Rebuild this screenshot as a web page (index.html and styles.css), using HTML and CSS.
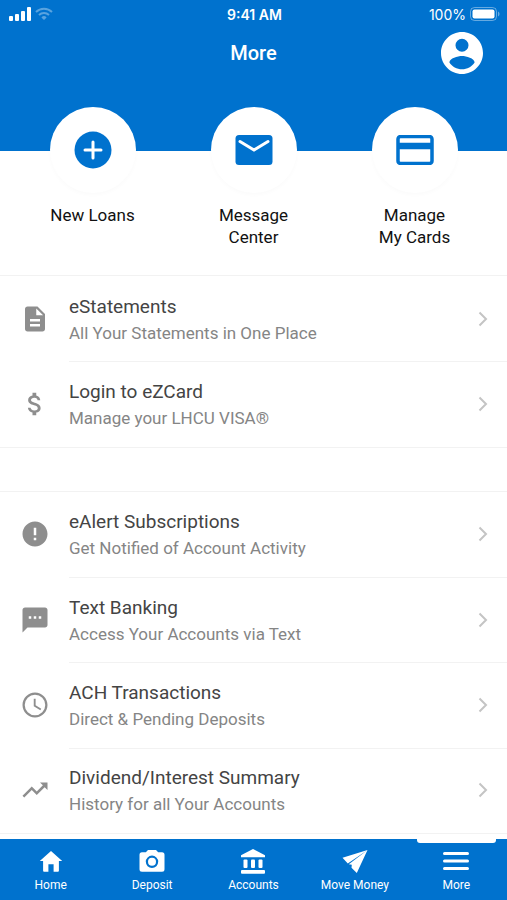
FILE: index.html
```html
<!DOCTYPE html>
<html lang="en">
<head>
    <meta charset="UTF-8">
    <meta name="viewport" content="width=device-width, initial-scale=1">
    <title>More</title>
    <link rel="stylesheet" href="styles.css">
</head>
<body>
<div class="app">
    <header class="header">
        <div class="status">
            <div class="status-left">
                <svg width="22" height="14" viewBox="0 0 22 14" fill="#fff">
                    <rect x="0" y="9" width="4" height="5" rx="1"/>
                    <rect x="6" y="7" width="4" height="7" rx="1"/>
                    <rect x="12" y="4" width="4" height="10" rx="1"/>
                    <rect x="18" y="0" width="4" height="14" rx="1"/>
                </svg>
                <svg class="wifi" width="18" height="14" viewBox="0 0 18 14" fill="none" stroke="#fff" stroke-width="2">
                    <path d="M1 5a11.500 11.500 0 0 1 16 0M4 8a7.200 7.200 0 0 1 10 0"/>
                    <path d="M9 13l-2.600-2.600a3.700 3.700 0 0 1 5.200 0z" fill="#fff" stroke="none"/>
                </svg>
            </div>
            <div class="status-time">9:41 AM</div>
            <div class="status-right">
                <span>100%</span>
                <svg width="30" height="14" viewBox="0 0 30 14">
                    <rect x="0.500" y="0.500" width="26" height="13" rx="4" fill="none" stroke="#fff" stroke-opacity=".4"/>
                    <rect x="2.500" y="2.500" width="22" height="9" rx="2" fill="#fff"/>
                    <path d="M28 4.500v5c2-.8 2-4.200 0-5z" fill="#fff" fill-opacity=".4"/>
                </svg>
            </div>
        </div>
        <div class="title">
            <h1>More</h1>
            <button class="profile" type="button" aria-label="Profile">
                <svg viewBox="2 2 20 20" fill="#fff"><path d="M12 2C6.480 2 2 6.480 2 12s4.480 10 10 10 10-4.480 10-10S17.520 2 12 2zm0 3.200a3.100 3.100 0 1 1 0 6.200 3.100 3.100 0 0 1 0-6.200zm0 14.500c-2.500 0-4.710-1.280-6-3.220.03-1.990 4-3.080 6-3.080s5.970 1.090 6 3.080c-1.290 1.940-3.500 3.220-6 3.220z"/></svg>
            </button>
        </div>
    </header>

    <main class="main">
        <div class="shortcuts">
            <a class="shortcut" href="#loans">
                <span class="circle">
                    <svg width="38" height="38" viewBox="0 0 38 38"><circle cx="19" cy="19" r="18.500" fill="#0072ce"/><path d="M19 11v16M11 19h16" stroke="#fff" stroke-width="3" stroke-linecap="round"/></svg>
                </span>
                New Loans
            </a>
            <a class="shortcut" href="#messages">
                <span class="circle">
                    <svg width="38" height="30" viewBox="0 0 38 30"><rect x="0.500" y="0" width="37" height="30" rx="3.500" fill="#0072ce"/><path d="M5 6.500l14 8.500 14-8.500" fill="none" stroke="#fff" stroke-width="3" stroke-linecap="round"/></svg>
                </span>
                Message<br>Center
            </a>
            <a class="shortcut" href="#cards">
                <span class="circle">
                    <svg width="38" height="30" viewBox="0 0 38 30"><rect x="2" y="1.500" width="34" height="27" rx="2.500" fill="none" stroke="#0072ce" stroke-width="3.500"/><path d="M2 11h34" stroke="#0072ce" stroke-width="6.500"/></svg>
                </span>
                Manage<br>My Cards
            </a>
        </div>

        <ul class="list list-short">
            <li>
                <a class="row" href="#estatements">
                    <svg class="icon" viewBox="0 0 24 24"><path d="M14 2H6c-1.100 0-2 .9-2 2v16c0 1.100.9 2 2 2h12c1.100 0 2-.9 2-2V8l-6-6zm2 16H8v-2h8v2zm0-4H8v-2h8v2zm-3-5V3.500L18.500 9H13z"/></svg>
                    <span class="text"><strong>eStatements</strong><span>All Your Statements in One Place</span></span>
                    <svg class="arrow" viewBox="0 0 10 16"><path d="M1.500 1.500L8 8l-6.500 6.500"/></svg>
                </a>
            </li>
            <li>
                <a class="row" href="#ezcard">
                    <svg class="icon" viewBox="0 0 24 24"><path d="M11.800 10.900c-2.270-.59-3-1.200-3-2.150 0-1.090 1.010-1.850 2.700-1.850 1.780 0 2.440.85 2.500 2.100h2.210c-.07-1.720-1.120-3.300-3.210-3.810V3h-3v2.160c-1.940.42-3.500 1.680-3.500 3.610 0 2.310 1.910 3.460 4.700 4.130 2.500.6 3 1.480 3 2.410 0 .69-.49 1.790-2.700 1.790-2.060 0-2.870-.92-2.980-2.100h-2.200c.12 2.190 1.760 3.420 3.680 3.830V21h3v-2.150c1.950-.37 3.500-1.500 3.500-3.550 0-2.840-2.430-3.810-4.700-4.400z"/></svg>
                    <span class="text"><strong>Login to eZCard</strong><span>Manage your LHCU VISA®</span></span>
                    <svg class="arrow" viewBox="0 0 10 16"><path d="M1.500 1.500L8 8l-6.500 6.500"/></svg>
                </a>
            </li>
        </ul>

        <ul class="list list-long">
            <li>
                <a class="row" href="#ealert">
                    <svg class="icon" viewBox="0 0 24 24"><path d="M12 2C6.480 2 2 6.480 2 12s4.480 10 10 10 10-4.480 10-10S17.520 2 12 2zm1 15h-2v-2h2v2zm0-4h-2V7h2v6z"/></svg>
                    <span class="text"><strong>eAlert Subscriptions</strong><span>Get Notified of Account Activity</span></span>
                    <svg class="arrow" viewBox="0 0 10 16"><path d="M1.500 1.500L8 8l-6.500 6.500"/></svg>
                </a>
            </li>
            <li>
                <a class="row" href="#text-banking">
                    <svg class="icon" viewBox="0 0 24 24"><path d="M20 2H4c-1.100 0-2 .9-2 2v18l4-4h14c1.100 0 2-.9 2-2V4c0-1.100-.9-2-2-2zM9 11H7V9h2v2zm4 0h-2V9h2v2zm4 0h-2V9h2v2z"/></svg>
                    <span class="text"><strong>Text Banking</strong><span>Access Your Accounts via Text</span></span>
                    <svg class="arrow" viewBox="0 0 10 16"><path d="M1.500 1.500L8 8l-6.500 6.500"/></svg>
                </a>
            </li>
            <li>
                <a class="row" href="#ach">
                    <svg class="icon" viewBox="0 0 24 24"><path d="M12 2C6.470 2 2 6.480 2 12s4.470 10 10 10 10-4.480 10-10S17.520 2 12 2zm0 18.200a8.200 8.200 0 1 1 0-16.400 8.200 8.200 0 0 1 0 16.400zM12.500 7H11v6l5.250 3.150.75-1.230-4.500-2.670z"/></svg>
                    <span class="text"><strong>ACH Transactions</strong><span>Direct &amp; Pending Deposits</span></span>
                    <svg class="arrow" viewBox="0 0 10 16"><path d="M1.500 1.500L8 8l-6.500 6.500"/></svg>
                </a>
            </li>
            <li>
                <a class="row" href="#dividend">
                    <svg class="icon" viewBox="0 0 24 24"><path d="M16 6l2.290 2.290-4.880 4.880-4-4L2 16.590 3.410 18l6-6 4 4 6.300-6.290L22 12V6z"/></svg>
                    <span class="text"><strong>Dividend/Interest Summary</strong><span>History for all Your Accounts</span></span>
                    <svg class="arrow" viewBox="0 0 10 16"><path d="M1.500 1.500L8 8l-6.500 6.500"/></svg>
                </a>
            </li>
        </ul>
    </main>

    <nav class="tabs">
        <a href="#home">
            <svg viewBox="0 0 28 28"><path d="M14 3L2.800 13.100h3.300v9.400c0 .8.500 1.300 1.300 1.300h4v-7.500h5.200v7.500h4c.8 0 1.300-.5 1.300-1.300v-9.400h3.300z"/></svg>
            Home
        </a>
        <a href="#deposit">
            <svg viewBox="0 0 28 28"><path fill-rule="evenodd" d="M10 2L7.800 4.200H4A2.500 2.500 0 0 0 1.500 6.700v14.600A2.500 2.500 0 0 0 4 23.800h20a2.500 2.500 0 0 0 2.500-2.500V6.700A2.500 2.500 0 0 0 24 4.200h-3.800L18 2zM14 7.600a6.200 6.200 0 1 1 0 12.400 6.200 6.200 0 0 1 0-12.400z"/><circle cx="14" cy="13.800" r="4"/></svg>
            Deposit
        </a>
        <a href="#accounts">
            <svg viewBox="0 0 28 28"><path d="M14 1L2 7.300V9.300h24V7.300z"/><rect x="4.500" y="11.500" width="4" height="8.500" rx="1"/><rect x="12" y="11.500" width="4" height="8.500" rx="1"/><rect x="19.500" y="11.500" width="4" height="8.500" rx="1"/><rect x="2" y="22" width="24" height="3.800" rx="1"/></svg>
            Accounts
        </a>
        <a href="#move-money">
            <svg viewBox="0 0 28 28"><path d="M26.500 2L1.500 9.800l5.300 5.600zM26.500 2L7.800 16.200l3 .6-.3 3L15.800 25z"/></svg>
            Move Money
        </a>
        <a class="now" href="#more">
            <svg viewBox="0 0 28 28"><path d="M2.500 5.500h23M2.500 13h23M2.500 20.500h23" stroke="#fff" stroke-width="3" stroke-linecap="round"/></svg>
            More
        </a>
    </nav>
</div>
</body>
</html>
```
FILE: styles.css
```css
* {
    box-sizing: border-box;
    padding: 0;
    margin: 0;
}
body {
    font-family: Roboto, "Liberation Sans", sans-serif;
    background-color: #fff;
}
a {
    text-decoration: none;
    color: inherit;
}
li {
    list-style: none;
}
svg {
    display: block;
    flex: none;
}
.app {
    display: flex;
    flex-direction: column;
    min-height: 100vh;
}

/* header */
.header {
    height: 151px;
    background-color: #0072ce;
    color: #fff;
}
.status {
    display: grid;
    grid-template-columns: 1fr auto 1fr;
    align-items: center;
    height: 28px;
    padding: 0 7px 0 9px;
    font-family: Inter, sans-serif;
    font-size: 14px;
}
.status-left,
.status-right {
    display: flex;
    align-items: center;
    gap: 4px;
}
.status-right {
    justify-content: flex-end;
}
.wifi {
    opacity: .35;
}
.status-time {
    font-weight: 600;
}
.title {
    display: grid;
    grid-template-columns: 1fr auto 1fr;
    align-items: center;
    height: 50px;
    padding: 0 24px;
}
.title h1 {
    grid-column: 2;
    font-size: 20px;
    font-weight: 500;
}
.profile {
    justify-self: end;
    width: 42px;
    height: 42px;
    border: 0;
    background: none;
    cursor: pointer;
}

/* shortcuts */
.main {
    flex: 1;
    display: flex;
    flex-direction: column;
    padding-bottom: 5px;
}
.shortcuts {
    display: grid;
    grid-template-columns: repeat(3, 1fr);
    height: 168px;
    margin-top: -44px;
    padding: 0 12px;
}
.shortcut {
    display: flex;
    flex-direction: column;
    align-items: center;
    font-size: 17px;
    line-height: 22px;
    text-align: center;
    color: #111;
}
.circle {
    display: flex;
    align-items: center;
    justify-content: center;
    width: 86px;
    height: 86px;
    margin-bottom: 11px;
    border-radius: 50%;
    background-color: #fff;
    box-shadow: 0 2px 4px rgba(0, 0, 0, 0.02);
}

/* lists */
.list {
    display: flex;
    flex-direction: column;
    border-top: 1px solid #f2f2f2;
    border-bottom: 1px solid #f2f2f2;
}
.list-short {
    flex: 2;
    margin-bottom: 43px;
}
.list-long {
    flex: 4;
}
.list li {
    flex: 1;
    display: flex;
}
.row {
    position: relative;
    flex: 1;
    display: flex;
    align-items: center;
    padding-left: 20px;
}
.list li + li .row::before {
    content: "";
    position: absolute;
    top: 0;
    left: 69px;
    right: 0;
    border-top: 1px solid #f2f2f2;
}
.icon {
    width: 30px;
    height: 30px;
    fill: #8e8e8e;
}
.text {
    flex: 1;
    display: flex;
    flex-direction: column;
    margin-left: 19px;
    padding-top: 2px;
    font-size: 17px;
    line-height: 26px;
    color: #858585;
}
.text strong {
    font-size: 19px;
    font-weight: 400;
    color: #444;
}
.arrow {
    width: 10px;
    height: 16px;
    margin-right: 19px;
    fill: none;
    stroke: #c4c4c4;
    stroke-width: 2;
}

/* bottom tabs */
.tabs {
    display: grid;
    grid-template-columns: repeat(5, 1fr);
    height: 61px;
    background-color: #0072ce;
    color: #fff;
}
.tabs a {
    position: relative;
    display: flex;
    flex-direction: column;
    align-items: center;
    padding-top: 9px;
    font-size: 12px;
    line-height: 18px;
}
.tabs svg {
    width: 28px;
    height: 28px;
    fill: #fff;
}
.tabs .now::before {
    content: "";
    position: absolute;
    top: 0;
    left: 11px;
    right: 11px;
    height: 4px;
    border-radius: 0 0 3px 3px;
    background-color: #fff;
}
```
